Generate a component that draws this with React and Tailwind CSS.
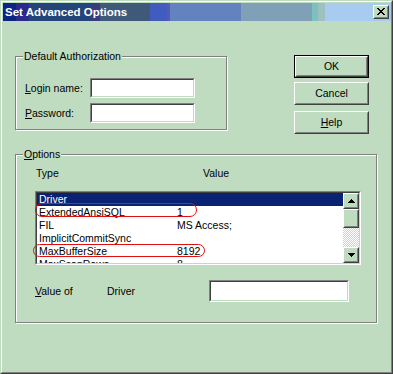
import React from "react";

function Raised({ className = "", children }) {
  return (
    <div className={`border border-t-white border-l-white border-r-[#404040] border-b-[#404040] ${className}`}>
      <div className="w-full h-full border border-t-[#c0dcc0] border-l-[#c0dcc0] border-r-[#808080] border-b-[#808080] flex items-center justify-center">
        {children}
      </div>
    </div>
  );
}

function Sunken({ className = "", children }) {
  return (
    <div className={`border border-t-[#808080] border-l-[#808080] border-r-white border-b-white ${className}`}>
      <div className="w-full h-full border border-t-[#404040] border-l-[#404040] border-r-[#c0dcc0] border-b-[#c0dcc0] bg-white overflow-hidden">
        {children}
      </div>
    </div>
  );
}

function Group({ label, className = "", children }) {
  return (
    <div className={`relative border border-[#808080] shadow-[inset_1px_1px_0_#fff,1px_1px_0_#fff] ${className}`}>
      <span className="absolute left-[7px] top-[-7px] px-px bg-[#c0dcc0]">{label}</span>
      {children}
    </div>
  );
}

function Arrow({ down }) {
  return (
    <svg width="7" height="4" viewBox="0 0 7 4" shapeRendering="crispEdges">
      <polygon points={down ? "0,0 7,0 3.5,4" : "0,4 7,4 3.5,0"} fill="#000" />
    </svg>
  );
}

const rows = [
  ["Driver", ""],
  ["ExtendedAnsiSQL", "1"],
  ["FIL", "MS Access;"],
  ["ImplicitCommitSync", ""],
  ["MaxBufferSize", "8192"],
  ["MaxScanRows", "8"],
];

function TitleBar() {
  return (
    <div className="relative w-[388px] h-[18px] flex items-center justify-between pl-[2px] pr-[2px]">
      <div className="absolute inset-0 flex">
        <div className="w-[13px] bg-[#0c2486]" />
        <div className="w-[13px] bg-[#2a2a8c]" />
        <div className="w-[63px] bg-[#24457a]" />
        <div className="w-[8px] bg-[#3a3a80]" />
        <div className="w-[50px] bg-[#3e5a78]" />
        <div className="w-[17px] bg-[#405cbe]" />
        <div className="w-[3px] bg-[#5858b8]" />
        <div className="w-[71px] bg-[#6282c0]" />
        <div className="w-[71px] bg-[#80a0b8]" />
        <div className="w-[6px] bg-[#7ec0c0]" />
        <div className="w-[7px] bg-[#9ec0c0]" />
        <div className="flex-1 bg-[#a8ccf0]" />
      </div>
      <span className="relative text-white font-bold text-[11.5px]">Set Advanced Options</span>
      <Raised className="relative w-[16px] h-[14px] bg-[#c0dcc0]">
        <svg width="8" height="7" viewBox="0 0 8 7" shapeRendering="crispEdges" className="-mt-px -ml-px">
          <path d="M0 0h2v1h-2zM6 0h2v1h-2zM1 1h2v1h-2zM5 1h2v1h-2zM2 2h4v1h-4zM3 3h2v1h-2zM2 4h4v1h-4zM1 5h2v1h-2zM5 5h2v1h-2zM0 6h2v1h-2zM6 6h2v1h-2z" fill="#000" />
        </svg>
      </Raised>
    </div>
  );
}

export default function App() {
  return (
    <div className="w-[393px] h-[374px] bg-[#c0dcc0] border border-t-[#c0dcc0] border-l-[#c0dcc0] border-r-[#404040] border-b-[#404040] font-['Liberation_Sans',Arial,sans-serif] text-[10.5px] leading-[13px] text-black">
      <div className="h-full border border-t-white border-l-white border-r-[#808080] border-b-[#808080] pt-px pl-px">
        <TitleBar />
        <div className="pl-[12px]">
          {/* top row: authorization + buttons */}
          <div className="flex items-start mt-[34px]">
            <Group label="Default Authorization" className="mt-px w-[212px] h-[74px] pt-[21px] flex flex-col gap-[5px]">
              <div className="flex items-center">
                <span className="pl-[9px] w-[74px]"><span className="underline underline-offset-[1px]">L</span>ogin name:</span>
                <Sunken className="w-[105px] h-[20px]" />
              </div>
              <div className="flex items-center">
                <span className="pl-[9px] w-[74px]"><span className="underline underline-offset-[1px]">P</span>assword:</span>
                <Sunken className="w-[105px] h-[20px]" />
              </div>
            </Group>
            <div className="ml-[67px] flex flex-col">
              <div className="border border-black w-[75px] h-[23px]">
                <Raised className="w-full h-full">OK</Raised>
              </div>
              <Raised className="mt-[4px] w-[75px] h-[23px]">Cancel</Raised>
              <Raised className="mt-[6px] w-[75px] h-[23px]">
                <span><span className="underline underline-offset-[1px]">H</span>elp</span>
              </Raised>
            </div>
          </div>

          {/* options */}
          <Group
            label={<span><span className="underline underline-offset-[1px]">O</span>ptions</span>}
            className="mt-[20px] w-[362px] h-[169px] pt-[12px]"
          >
            <div className="flex pl-[20px]">
              <span className="w-[167px]">Type</span>
              <span>Value</span>
            </div>
            <div className="relative ml-[19px] mt-[11px] w-[326px] h-[74px]">
              <Sunken className="w-full h-full">
                <div className="flex h-full">
                  <div className="flex-1 overflow-hidden">
                    {rows.map(([k, v], i) => (
                      <div
                        key={k}
                        className={`flex h-[13px] items-center ${i === 0 ? "bg-[#0a2272] text-white" : ""}`}
                      >
                        <span className="w-[140px] pl-[2px] shrink-0">{k}</span>
                        <span>{v}</span>
                      </div>
                    ))}
                  </div>
                  <div className="w-[16px] flex flex-col">
                    <Raised className="h-[16px] bg-[#c0dcc0]"><Arrow /></Raised>
                    <Raised className="h-[19px] bg-[#c0dcc0]" />
                    <div className="flex-1 bg-[repeating-conic-gradient(#ffffff_0_25%,#c0dcc0_0_50%)] bg-[length:2px_2px]" />
                    <Raised className="h-[16px] bg-[#c0dcc0]"><Arrow down /></Raised>
                  </div>
                </div>
              </Sunken>
              <div className="absolute left-0 top-[12px] w-[162px] h-[14px] rounded-[7px] border border-[#e01010]" />
              <div className="absolute left-[-2px] top-[53px] w-[172px] h-[13px] rounded-[7px] border border-[#e01010]" />
            </div>
            <div className="flex items-center mt-[15px] pl-[19px]">
              <span className="w-[72px]"><span className="underline underline-offset-[1px]">V</span>alue of</span>
              <span className="w-[102px]">Driver</span>
              <Sunken className="w-[140px] h-[22px]" />
            </div>
          </Group>
        </div>
      </div>
    </div>
  );
}
